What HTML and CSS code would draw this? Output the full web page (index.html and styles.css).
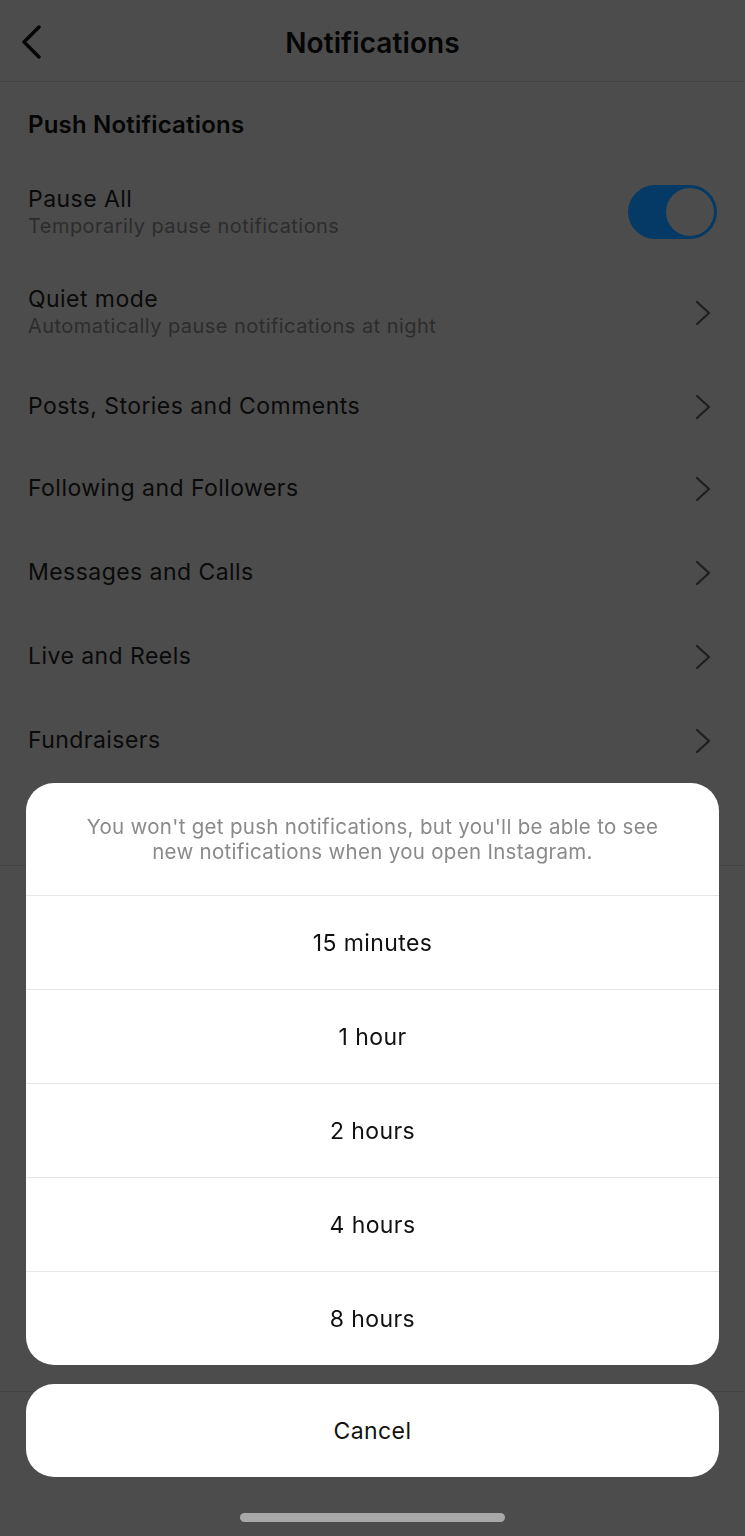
FILE: index.html
```html
<!DOCTYPE html>
<html lang="en">
<head>
<meta charset="utf-8">
<title>Notifications</title>
<link rel="stylesheet" href="styles.css">
</head>
<body>
<div class="screen">
  <header class="topbar">
    <svg class="back" width="22" height="34" viewBox="0 0 22 34"><path d="M19 2 L4 17 L19 32" fill="none" stroke="#050505" stroke-width="3.4" stroke-linecap="round" stroke-linejoin="round"/></svg>
    <h1 class="title">Notifications</h1>
    <span class="topbar-spacer"></span>
  </header>
  <main class="settings">
    <h2 class="section-title">Push Notifications</h2>
    <div class="row row-tall">
      <div class="row-text">
        <div class="row-label">Pause All</div>
        <div class="row-sub">Temporarily pause notifications</div>
      </div>
      <div class="toggle"><span class="knob"></span></div>
    </div>
    <div class="row row-tall">
      <div class="row-text">
        <div class="row-label">Quiet mode</div>
        <div class="row-sub">Automatically pause notifications at night</div>
      </div>
      <svg class="chev" width="16" height="26" viewBox="0 0 16 26"><path d="M2 2 L14 13 L2 24" fill="none" stroke="#1e1e1e" stroke-width="2.2" stroke-linecap="round" stroke-linejoin="round"/></svg>
    </div>
    <div class="row row-after-tall"><div class="row-label">Posts, Stories and Comments</div><svg class="chev" width="16" height="26" viewBox="0 0 16 26"><path d="M2 2 L14 13 L2 24" fill="none" stroke="#1e1e1e" stroke-width="2.2" stroke-linecap="round" stroke-linejoin="round"/></svg></div>
    <div class="row"><div class="row-label">Following and Followers</div><svg class="chev" width="16" height="26" viewBox="0 0 16 26"><path d="M2 2 L14 13 L2 24" fill="none" stroke="#1e1e1e" stroke-width="2.2" stroke-linecap="round" stroke-linejoin="round"/></svg></div>
    <div class="row"><div class="row-label">Messages and Calls</div><svg class="chev" width="16" height="26" viewBox="0 0 16 26"><path d="M2 2 L14 13 L2 24" fill="none" stroke="#1e1e1e" stroke-width="2.2" stroke-linecap="round" stroke-linejoin="round"/></svg></div>
    <div class="row"><div class="row-label">Live and Reels</div><svg class="chev" width="16" height="26" viewBox="0 0 16 26"><path d="M2 2 L14 13 L2 24" fill="none" stroke="#1e1e1e" stroke-width="2.2" stroke-linecap="round" stroke-linejoin="round"/></svg></div>
    <div class="row"><div class="row-label">Fundraisers</div><svg class="chev" width="16" height="26" viewBox="0 0 16 26"><path d="M2 2 L14 13 L2 24" fill="none" stroke="#1e1e1e" stroke-width="2.2" stroke-linecap="round" stroke-linejoin="round"/></svg></div>
    <div class="row row-divided"></div>
    <div class="block-divided"></div>
  </main>
</div>

<div class="overlay">
  <div class="sheet">
    <p class="sheet-note">You won't get push notifications, but you'll be able to see new notifications when you open Instagram.</p>
    <div class="option">15 minutes</div>
    <div class="option">1 hour</div>
    <div class="option">2 hours</div>
    <div class="option">4 hours</div>
    <div class="option">8 hours</div>
  </div>
  <div class="cancel">Cancel</div>
  <div class="home-bar"><span class="home-indicator"></span></div>
</div>
</body>
</html>
```

FILE: styles.css
```css
* { box-sizing: border-box; }

html, body {
  margin: 0;
  padding: 0;
}

body {
  background: #4c4c4c;
  font-family: Inter, "Noto Sans", "Liberation Sans", sans-serif;
  color: #0a0a0a;
  width: 745px;
  height: 1536px;
  overflow: hidden;
}

.screen {
  display: flex;
  flex-direction: column;
}

.topbar {
  height: 82px;
  border-bottom: 1px solid #444444;
  display: grid;
  grid-template-columns: 1fr auto 1fr;
  align-items: center;
  padding: 4px 0 0;
}

.back {
  grid-column: 1;
  justify-self: start;
  margin-left: 20px;
  margin-top: -2px;
}

.title {
  grid-column: 2;
  margin: 0;
  font-size: 28px;
  font-weight: 600;
  color: #050505;
  letter-spacing: 0.1px;
}

.settings {
  display: flex;
  flex-direction: column;
}

.section-title {
  margin: 0;
  height: 80px;
  padding: 4px 28px 0;
  display: flex;
  align-items: center;
  font-size: 24px;
  font-weight: 600;
  color: #050505;
  letter-spacing: 0.2px;
}

.row {
  height: 84px;
  padding: 0 34px 0 28px;
  display: flex;
  align-items: center;
  justify-content: space-between;
  flex-shrink: 0;
}

.row-tall {
  height: 100px;
}

.row-tall:first-of-type {
  padding-right: 28px;
}

.row-after-tall {
  padding-top: 4px;
}

.row-text {
  display: flex;
  flex-direction: column;
  gap: 1px;
}

.row-label {
  font-size: 23px;
  color: #0a0a0a;
  letter-spacing: 0.45px;
  line-height: 27px;
}

.row-sub {
  font-size: 20px;
  color: #2c2c2c;
  letter-spacing: 0.45px;
  line-height: 24px;
}

.chev {
  flex-shrink: 0;
  margin-top: 2px;
}

.toggle {
  width: 89px;
  height: 54px;
  border-radius: 27px;
  background: #053a66;
  display: flex;
  align-items: center;
  justify-content: flex-end;
  padding: 3px;
  flex-shrink: 0;
}

.knob {
  width: 48px;
  height: 48px;
  border-radius: 50%;
  background: #4c4c4c;
}

.row-divided {
  border-bottom: 1px solid #444444;
}

.block-divided {
  height: 526px;
  border-bottom: 1px solid #444444;
}

/* Action sheet overlay */
.overlay {
  position: fixed;
  inset: 0;
  display: flex;
  flex-direction: column;
  justify-content: flex-end;
  align-items: stretch;
  padding: 0 26px;
}

.sheet {
  background: #ffffff;
  border-radius: 28px;
  overflow: hidden;
  display: flex;
  flex-direction: column;
}

.sheet-note {
  margin: 0;
  height: 112px;
  padding: 31px 56px 0;
  text-align: center;
  font-size: 20.5px;
  line-height: 25px;
  color: #8a8a8a;
  letter-spacing: 0.3px;
}

.option {
  height: 94px;
  border-top: 1px solid #e6e6e6;
  display: flex;
  align-items: center;
  justify-content: center;
  font-size: 23px;
  color: #111111;
  letter-spacing: 0.4px;
}

.cancel {
  margin-top: 19px;
  height: 93px;
  background: #ffffff;
  border-radius: 28px;
  display: flex;
  align-items: center;
  justify-content: center;
  font-size: 23px;
  color: #111111;
  letter-spacing: 0.4px;
}

.home-bar {
  height: 59px;
  display: flex;
  justify-content: center;
  padding-top: 36px;
}

.home-indicator {
  width: 265px;
  height: 9px;
  border-radius: 5px;
  background: #a8a8a8;
}
```
